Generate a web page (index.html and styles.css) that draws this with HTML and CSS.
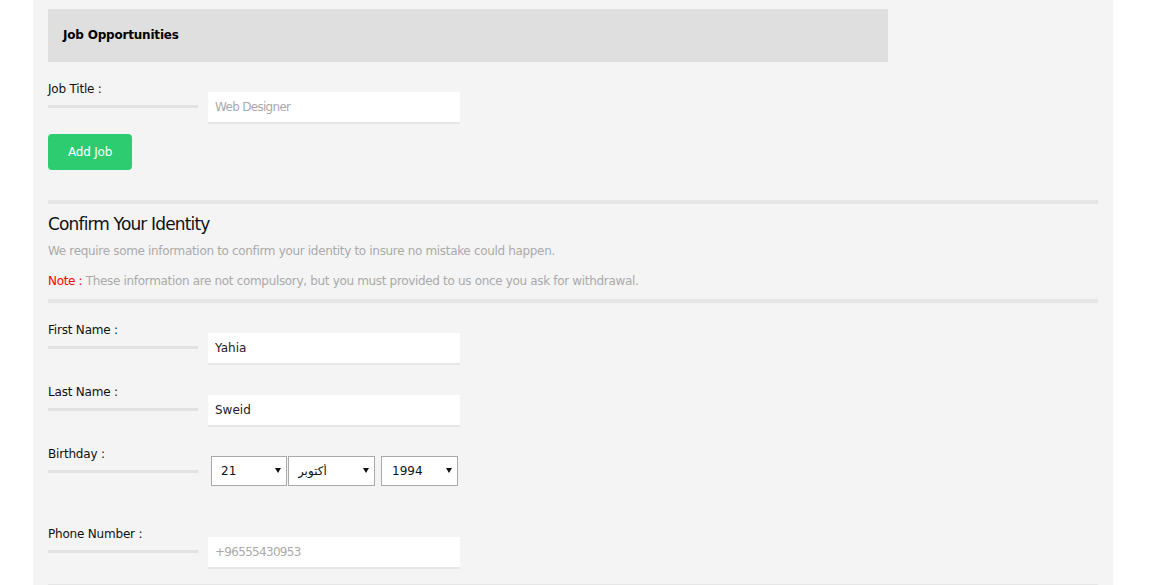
FILE: index.html
```html
<!DOCTYPE html>
<html>
<head>
<meta charset="utf-8">
<link rel="stylesheet" href="styles.css">
</head>
<body>
<div class="panel">
  <div class="section-head">Job Opportunities</div>

  <div class="row">
    <div class="label">Job Title :</div>
    <input class="field" type="text" placeholder="Web Designer">
  </div>
  <button class="btn">Add Job</button>

  <div class="divider"></div>
  <h2 class="title">Confirm Your Identity</h2>
  <p class="desc">We require some information to confirm your identity to insure no mistake could happen.</p>
  <p class="desc desc-note"><span class="note">Note :</span> These information are not compulsory, but you must provided to us once you ask for withdrawal.</p>
  <div class="divider divider-2"></div>

  <div class="row">
    <div class="label">First Name :</div>
    <input class="field filled" type="text" value="Yahia">
  </div>
  <div class="row">
    <div class="label">Last Name :</div>
    <input class="field filled" type="text" value="Sweid">
  </div>
  <div class="row row-tall">
    <div class="label">Birthday :</div>
    <div class="selects">
      <span class="sel sel-day"><select><option>21</option></select></span>
      <span class="sel sel-month"><select><option>أكتوبر</option></select></span>
      <span class="sel sel-year"><select><option>1994</option></select></span>
    </div>
  </div>
  <div class="row">
    <div class="label">Phone Number :</div>
    <input class="field" type="text" placeholder="+96555430953">
  </div>
  <div class="divider divider-3"></div>
</div>
</body>
</html>
```

FILE: styles.css
```css
html, body {
  margin: 0;
  padding: 0;
  background: #ffffff;
}
body {
  font-family: "DejaVu Sans", "Liberation Sans", sans-serif;
  font-size: 12px;
  color: #111;
}
.panel {
  margin-left: 33px;
  width: 1080px;
  height: 585px;
  background: #f4f4f4;
  box-sizing: border-box;
  padding: 9px 15px 0 15px;
  overflow: hidden;
}
.section-head {
  width: 840px;
  height: 53px;
  background: #dfdfdf;
  box-sizing: border-box;
  padding-left: 15px;
  line-height: 53px;
  font-weight: bold;
  font-size: 12px;
  letter-spacing: -0.2px;
  color: #000;
  margin-bottom: 17px;
}
.row {
  display: flex;
  align-items: flex-start;
  margin-bottom: 17px;
}
.row-tall {
  margin-bottom: 38px;
}
.label {
  width: 150px;
  line-height: 18px;
  padding-top: 1px;
  padding-bottom: 7px;
  border-bottom: 3px solid #e2e2e2;
  color: #111;
  letter-spacing: -0.2px;
}
.field {
  margin: 13px 0 0 10px;
  width: 252px;
  height: 32px;
  box-sizing: border-box;
  border: none;
  border-bottom: 2px solid #e6e6e6;
  background: #fff;
  padding: 0 7px;
  font-family: inherit;
  font-size: 12px;
  color: #222;
  outline: none;
}
.field::placeholder {
  color: #aaa;
  letter-spacing: -0.7px;
}
.btn {
  display: block;
  margin-top: -7px;
  width: 84px;
  height: 36px;
  border: none;
  border-radius: 4px;
  background: #2ecc71;
  color: #fff;
  font-family: inherit;
  font-size: 12px;
  letter-spacing: -0.2px;
  cursor: pointer;
}
.divider {
  height: 4px;
  width: 1050px;
  background: #e6e6e6;
  margin-top: 30px;
}
.divider-2 {
  margin-top: 7px;
}
.divider-3 {
  margin-top: -2px;
}
.title {
  margin: 9px 0 0 0;
  font-weight: normal;
  font-size: 17px;
  line-height: 22px;
  letter-spacing: -0.85px;
  color: #111;
}
.desc {
  margin: 5px 0 0 0;
  line-height: 22px;
  color: #aaa;
  letter-spacing: -0.33px;
}
.desc-note {
  margin-top: 8px;
}
.note {
  color: #ff0000;
}
.divider-2 + .row {
  margin-top: 17px;
}
.selects {
  display: flex;
  margin: 12px 0 0 13px;
}
.sel {
  position: relative;
  display: block;
}
.sel select {
  appearance: none;
  -webkit-appearance: none;
  height: 30px;
  box-sizing: border-box;
  border: 1px solid #a9a9a9;
  border-radius: 0;
  background: #fff;
  font-family: inherit;
  font-size: 12px;
  color: #111;
  padding: 0 0 0 9px;
  direction: ltr;
  text-align: left;
}
.sel::after {
  content: "";
  position: absolute;
  right: 6px;
  top: 12px;
  border-left: 3px solid transparent;
  border-right: 3px solid transparent;
  border-top: 5px solid #111;
  pointer-events: none;
}
.sel-day select { width: 76px; }
.sel-month { margin-left: 1px; }
.sel-month select { width: 87px; }
.sel-year { margin-left: 6px; }
.sel-year select { width: 77px; padding-left: 10px; }
```
